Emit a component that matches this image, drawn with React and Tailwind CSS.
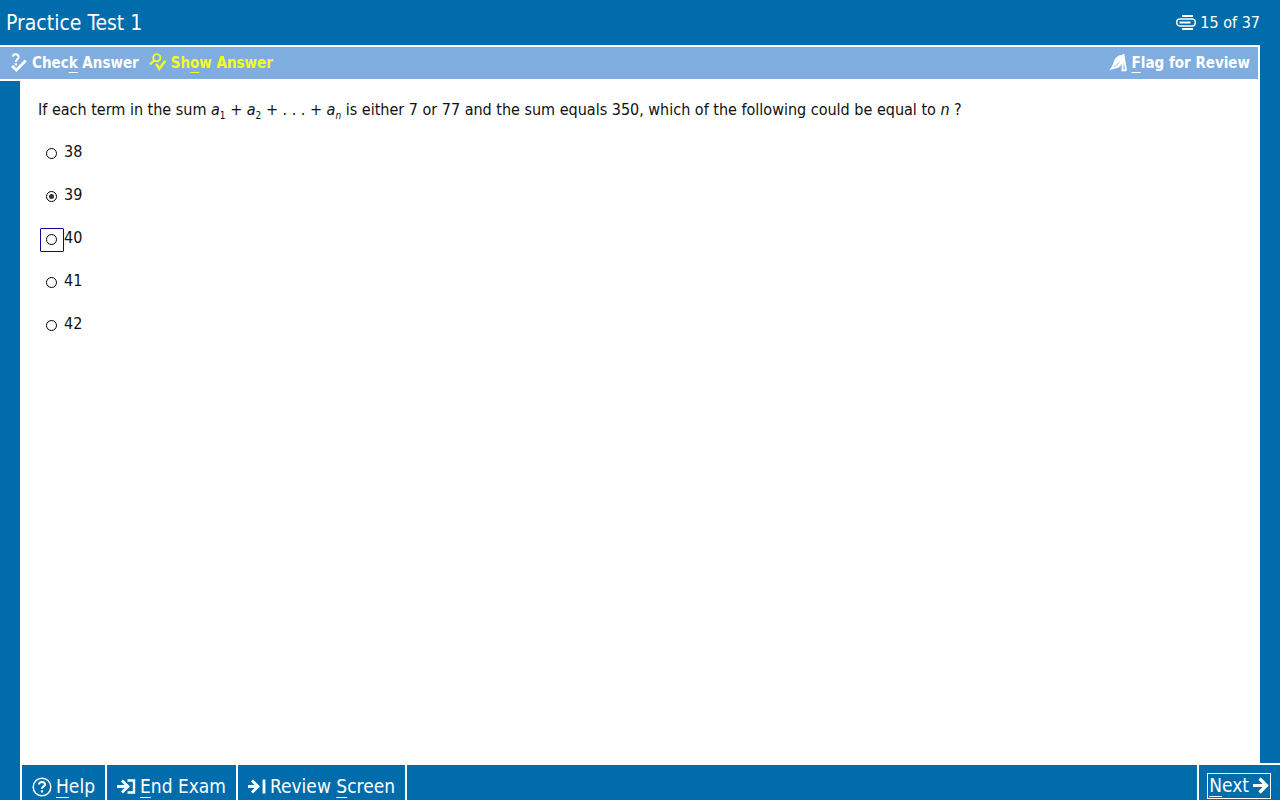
import { useState } from "react";

const choices = ["38", "39", "40", "41", "42"];

function CheckIcon() {
  return (
    <svg width="17" height="20" viewBox="0 0 17 20" fill="none" stroke="currentColor" aria-hidden="true">
      <path d="M1.8 3.6C2 1.8 3.2 1.2 4.6 1.2S7.6 2 7.6 4C7.6 6.2 5 6.2 4.8 9" strokeWidth="2" />
      <path d="M3.6 11.4h2.4" strokeWidth="2.2" />
      <path d="M1 13L5.4 17L14.8 7.6" strokeWidth="2.8" />
    </svg>
  );
}

function ShowIcon() {
  return (
    <svg width="18" height="20" viewBox="0 0 18 20" fill="none" stroke="currentColor" aria-hidden="true">
      <circle cx="7.8" cy="4.8" r="3.6" strokeWidth="1.8" />
      <path d="M5.3 7.4L1 11.4" strokeWidth="2.2" />
      <path d="M7.2 10.8L10.4 15.8L16.4 7.6" strokeWidth="2.4" />
    </svg>
  );
}

function FlagIcon() {
  return (
    <svg width="19" height="20" viewBox="0 0 19 20" fill="none" stroke="currentColor" aria-hidden="true">
      <path d="M13.3 2.5C9.5 2.5 7 4 5.6 7.6C4.6 11 3.6 13.6 1.2 16.8C5 14.2 8.5 16.2 11.5 12.2L14.2 8Z" fill="currentColor" strokeWidth="1" />
      <path d="M14.4 1L17 17.4M14.2 2L13.4 17.4h4" strokeWidth="1.8" />
      <path d="M4.8 13.6C7.6 13 9 11 10.6 9" stroke="#80addf" strokeWidth="0.8" />
    </svg>
  );
}

function ProgressIcon() {
  return (
    <svg width="20" height="15" viewBox="0 0 20 15" fill="none" stroke="currentColor" aria-hidden="true">
      <path d="M6 1h11M6 14h11" strokeWidth="1.8" />
      <rect x="0.8" y="4" width="18.4" height="7" rx="3" strokeWidth="1.4" />
      <path d="M3.5 7.5h11" strokeWidth="2" />
    </svg>
  );
}

function HelpIcon() {
  return (
    <svg width="20" height="20" viewBox="0 0 20 20" fill="none" stroke="currentColor" aria-hidden="true">
      <circle cx="10" cy="10" r="8.8" strokeWidth="1.5" />
      <path d="M7 7.6C7 5.8 8.3 4.9 10 4.9S13 5.9 13 7.4C13 9.5 10 9.4 10 11.8" strokeWidth="2" />
      <path d="M10 13.3v2.2" strokeWidth="2.2" />
    </svg>
  );
}

function EndIcon() {
  return (
    <svg width="19" height="16" viewBox="0 0 19 16" fill="none" stroke="currentColor" aria-hidden="true">
      <path d="M0 7.5H11M5 1.5L11 7.5L5 13.5" strokeWidth="2.8" />
      <path d="M10.5 1.5H17V13.5H10.5" strokeWidth="2.4" />
    </svg>
  );
}

function ReviewIcon() {
  return (
    <svg width="18" height="16" viewBox="0 0 18 16" fill="none" stroke="currentColor" aria-hidden="true">
      <path d="M0 7.5H9.5M4 1.5L10 7.5L4 13.5" strokeWidth="2.8" />
      <path d="M16 0.5V14.5" strokeWidth="2.8" />
    </svg>
  );
}

function NextIcon() {
  return (
    <svg width="16" height="18" viewBox="0 0 16 18" fill="none" stroke="currentColor" aria-hidden="true">
      <path d="M0 8.5H13M6.5 1.5L13.5 8.5L6.5 15.5" strokeWidth="3.2" />
    </svg>
  );
}

// underlined letter of an access key
function Key({ children }) {
  return <span className="underline decoration-1 underline-offset-4">{children}</span>;
}

export default function App() {
  const [answer, setAnswer] = useState("39");

  return (
    <div className="min-h-screen flex flex-col bg-[#006cab] text-white font-['DejaVu_Sans_Condensed','DejaVu_Sans',sans-serif]">
      <header className="h-[45px] pl-[6px] pr-5 flex items-center justify-between">
        <h1 className="text-[21px] leading-7">Practice Test 1</h1>
        <div className="flex items-center gap-1 text-base">
          <ProgressIcon />
          <span>15 of 37</span>
        </div>
      </header>

      <nav className="mr-5 h-9 pl-[11px] pr-2 flex items-center justify-between bg-[#80addf] border-y-2 border-r-2 border-white text-[15px] font-bold">
        <div className="flex items-center gap-[10px]">
          <button type="button" className="flex items-center gap-1">
            <CheckIcon />
            <span>Chec<Key>k</Key> Answer</span>
          </button>
          <button type="button" className="flex items-center gap-1 text-[#f4ff20]">
            <ShowIcon />
            <span>Sh<Key>o</Key>w Answer</span>
          </button>
        </div>
        <button type="button" className="flex items-center gap-1">
          <FlagIcon />
          <span><Key>F</Key>lag for Review</span>
        </button>
      </nav>

      <main className="flex-1 mx-5 pl-[18px] pt-[17px] bg-white text-[#111] text-base">
        <p id="question" className="leading-6">
          If each term in the sum <i>a</i><sub className="text-[10px] -bottom-1">1</sub> + <i>a</i><sub className="text-[10px] -bottom-1">2</sub> + . . . + <i>a</i><sub className="text-[10px] -bottom-1 italic">n</sub> is either 7 or 77 and the sum equals 350, which of the following could be equal to <i>n</i> ?
        </p>
        <div role="radiogroup" aria-labelledby="question" className="mt-5 pl-[2px] flex flex-col items-start gap-[19px]">
          {choices.map((c) => (
            <label key={c} className="flex items-center">
              <span className={c === "40" ? "size-6 pr-px pb-px flex items-center justify-center border border-[#0a0a96] rounded-[1px]" : "size-6 pr-px pb-px flex items-center justify-center"}>
                <input
                  type="radio"
                  name="answer"
                  value={c}
                  checked={answer === c}
                  onChange={() => setAnswer(c)}
                  className="appearance-none size-[11px] p-[2px] rounded-full border border-black bg-white bg-clip-content checked:bg-[#333]"
                />
              </span>
              <span className="pb-1 leading-5">{c}</span>
            </label>
          ))}
        </div>
      </main>

      <footer className="flex justify-between bg-white pt-[2px]">
        <div className="flex-1 flex bg-[#006cab] text-[19px]">
          <div className="w-5 -mt-[2px] bg-[#006cab]" />
          <button type="button" className="h-[35px] pt-2 px-[10px] flex items-center gap-1 border-x-2 border-white">
            <HelpIcon />
            <span><Key>H</Key>elp</span>
          </button>
          <button type="button" className="h-[35px] pt-2 px-[10px] flex items-center gap-1 border-r-2 border-white">
            <EndIcon />
            <span><Key>E</Key>nd Exam</span>
          </button>
          <button type="button" className="h-[35px] pt-2 px-[10px] flex items-center gap-1 border-r-2 border-white">
            <ReviewIcon />
            <span>Review <Key>S</Key>creen</span>
          </button>
          <button type="button" className="ml-auto h-[35px] pt-[6px] pl-2 pr-[9px] flex items-center border-l-2 border-white">
            <span className="h-[26px] px-[1px] flex items-center gap-1 border border-white">
              <span><Key>N</Key>ext</span>
              <NextIcon />
            </span>
          </button>
        </div>
      </footer>
    </div>
  );
}
